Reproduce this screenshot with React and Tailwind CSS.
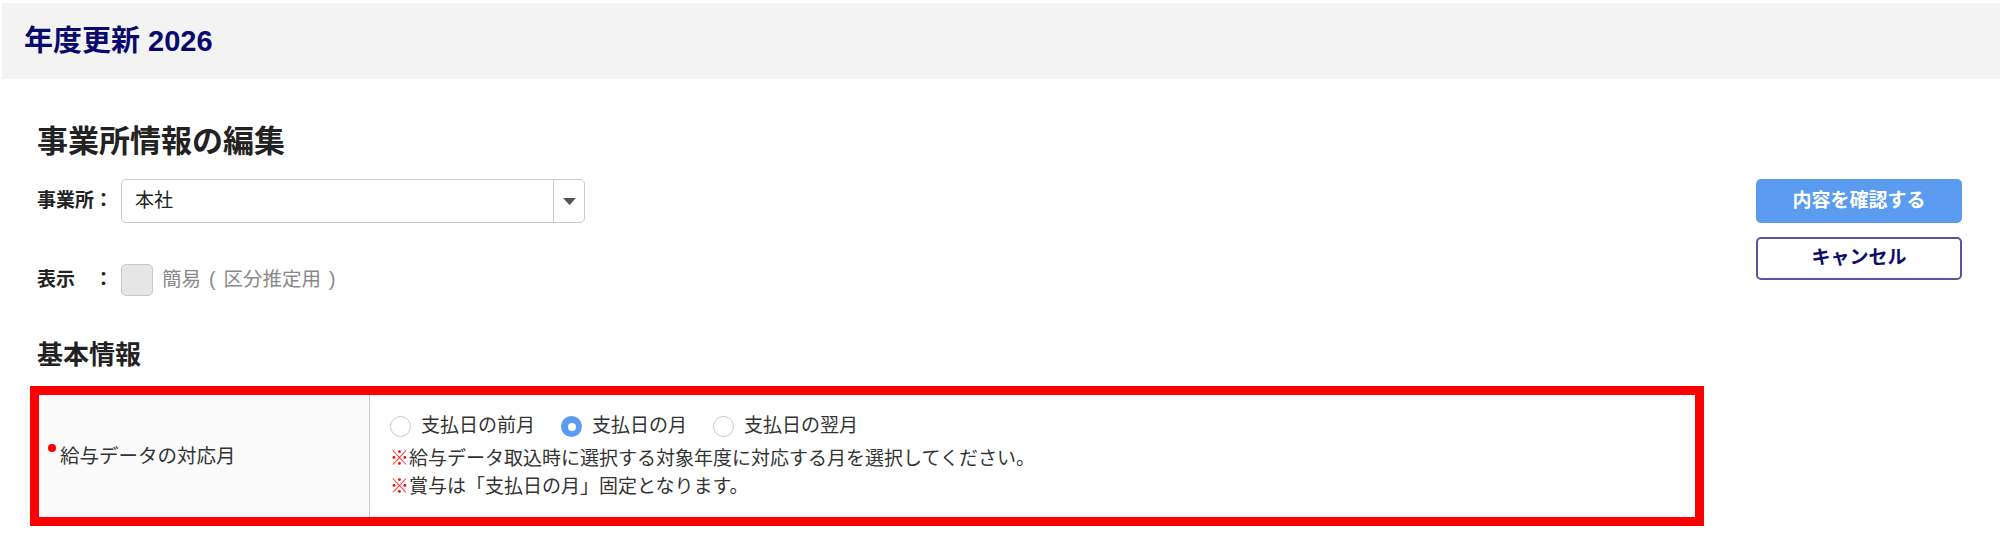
export default function App() {
  return (
    <div className="w-[2000px] h-[549px] bg-white overflow-hidden text-[#333] font-['Liberation_Sans','Noto_Sans_CJK_JP',sans-serif]">
      <div className="pt-[3px] pl-[2px]">
        <div className="h-[76px] bg-[#f3f3f3] flex items-center pl-[22px]">
          <h1 className="text-[29px] font-bold leading-none text-[#0a0a6e]">年度更新 2026</h1>
        </div>
      </div>

      <div className="flex pl-[37px] pr-[38px] pt-[40px]">
        <div className="w-[1667px]">
          <h2 className="text-[31px] font-bold leading-[46px] text-[#222]">事業所情報の編集</h2>

          <div className="mt-[14px] flex items-center h-[44px]">
            <div className="w-[84px] text-[19px] font-bold text-[#222]">事業所：</div>
            <div className="w-[464px] h-[44px] border border-[#cccccc] rounded-[5px] flex bg-white">
              <div className="flex-1 flex items-center pl-[13px] text-[19px] text-[#222]">本社</div>
              <div className="w-[31px] border-l border-[#cccccc] flex items-center justify-center">
                <svg width="13" height="7" viewBox="0 0 13 7">
                  <path d="M0 0 L13 0 L6.5 7 Z" fill="#555" />
                </svg>
              </div>
            </div>
          </div>

          <div className="mt-[41px] flex items-center h-[32px]">
            <div className="w-[84px] text-[19px] font-bold text-[#222]">表示　：</div>
            <div className="w-[32px] h-[32px] rounded-[5px] bg-[#e6e6e6] border border-[#c8c8c8]"></div>
            <div className="ml-[9px] text-[19.5px] text-[#888] flex items-center">
              <span>簡易</span>
              <span className="mx-[8px]">(</span>
              <span>区分推定用</span>
              <span className="ml-[8px]">)</span>
            </div>
          </div>

          <h3 className="mt-[40px] text-[26px] font-bold leading-[39px] text-[#222]">基本情報</h3>

          <div className="mt-[11px] -ml-[7px] w-[1674px] h-[140px] border-[9px] border-[#ff0000] flex">
            <div className="w-[331px] bg-[#fafafa] border-r border-[#cccccc] flex items-center pl-[9px]">
              <span className="inline-flex items-start">
                <span className="mt-[2px] mr-[4px] w-[8px] h-[8px] rounded-full bg-[#ff0000]"></span>
                <span className="text-[19.5px] leading-[28px] text-[#333]">給与データの対応月</span>
              </span>
            </div>
            <div className="flex-1 bg-white pl-[20px] pt-[15px]">
              <div className="h-[33px] flex items-center gap-[26px] text-[19px]">
                <label className="flex items-center gap-[10px]">
                  <span className="w-[21px] h-[21px] rounded-full border border-[#c8c8c8] bg-white"></span>
                  <span>支払日の前月</span>
                </label>
                <label className="flex items-center gap-[10px]">
                  <span className="w-[21px] h-[21px] rounded-full bg-[#5b9bf0] flex items-center justify-center">
                    <span className="w-[8px] h-[8px] rounded-full bg-white"></span>
                  </span>
                  <span>支払日の月</span>
                </label>
                <label className="flex items-center gap-[10px]">
                  <span className="w-[21px] h-[21px] rounded-full border border-[#c8c8c8] bg-white"></span>
                  <span>支払日の翌月</span>
                </label>
              </div>
              <div className="mt-[2px] text-[19px] leading-[28px]">
                <p><span className="text-[#ff0000]">※</span>給与データ取込時に選択する対象年度に対応する月を選択してください。</p>
                <p><span className="text-[#ff0000]">※</span>賞与は「支払日の月」固定となります。</p>
              </div>
            </div>
          </div>
        </div>

        <div className="ml-auto w-[206px] pt-[60px] flex flex-col gap-[14px]">
          <button className="h-[44px] rounded-[5px] bg-[#5b9bf0] text-white font-bold text-[19px]">内容を確認する</button>
          <button className="h-[43px] rounded-[5px] border-2 border-[#55559f] bg-white text-[#0d0d6b] font-bold text-[19px]">キャンセル</button>
        </div>
      </div>
    </div>
  );
}
